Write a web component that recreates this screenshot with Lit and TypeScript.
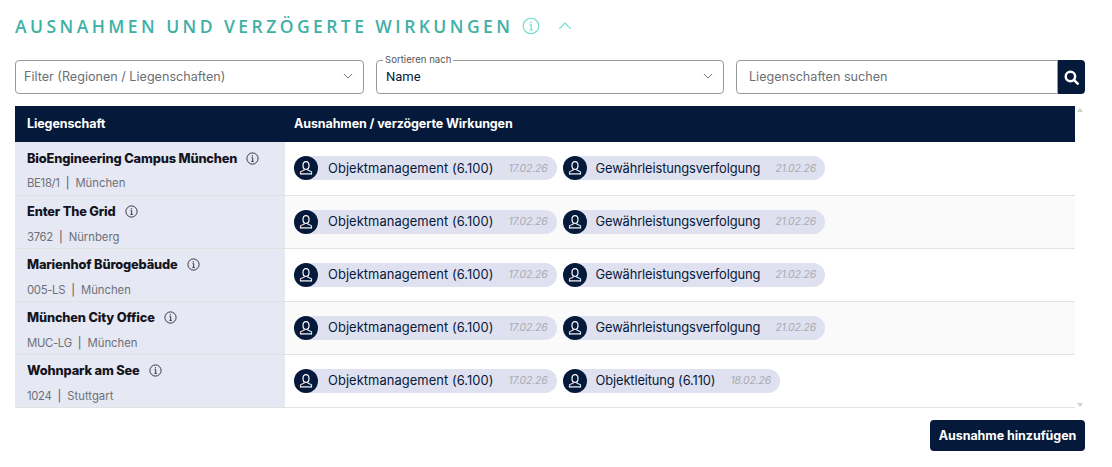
import { LitElement, html, css, svg } from "lit";
import { customElement } from "lit/decorators.js";

const rows = [
  { n: "BioEngineering Campus München", s: "BE18/1", c: "München", b: "Gewährleistungsverfolgung", d: "21.02.26" },
  { n: "Enter The Grid", s: "3762", c: "Nürnberg", b: "Gewährleistungsverfolgung", d: "21.02.26" },
  { n: "Marienhof Bürogebäude", s: "005-LS", c: "München", b: "Gewährleistungsverfolgung", d: "21.02.26" },
  { n: "München City Office", s: "MUC-LG", c: "München", b: "Gewährleistungsverfolgung", d: "21.02.26" },
  { n: "Wohnpark am See", s: "1024", c: "Stuttgart", b: "Objektleitung (6.110)", d: "18.02.26" },
];

const info = (cls: string) => html`<svg class=${cls} viewBox="0 0 16 16" fill="none" stroke="currentColor" stroke-width="1">
  <circle cx="8" cy="8" r="6.9"></circle>
  <path d="M6.7 7h1.5v4.4M6.5 11.5h3.2"></path>
  <circle cx="7.9" cy="4.7" r=".8" fill="currentColor" stroke="none"></circle>
</svg>`;
const chev = (cls: string) => html`<svg class=${cls} viewBox="0 0 12 7" fill="none" stroke="currentColor" stroke-width="1"><path d="M1 1l5 5 5-5"></path></svg>`;
const person = svg`<g fill="none" stroke-width="1.2">
  <ellipse cx="12" cy="9.6" rx="3" ry="3.9" stroke="#fff"></ellipse>
  <path stroke="#f4c6cc" d="M10.2 13.2v.9l-3.7 1.7v2.4"></path>
  <path stroke="#c4e6f6" d="M13.8 13.2v.9l3.7 1.7v2.4"></path>
  <path stroke="#fff" d="M6 17.9h12"></path>
</g>`;

@customElement("app-root")
export class AppRoot extends LitElement {
  static styles = css`
    :host { display: block; width: 1112px; height: 467px; background: #fff; font-family: "Inter", "Noto Sans", sans-serif; color: #051a3a; overflow: hidden; }
    .page { padding: 15px 27px 0 15px; display: flex; flex-direction: column; }
    .title { display: flex; align-items: center; height: 22px; color: #3fb0a6; font-family: "Open Sans", sans-serif; font-size: 17.5px; font-weight: 600; letter-spacing: 3.44px; }
    .title .i { width: 18px; height: 18px; margin-left: 9px; color: #6fdccf; }
    .title .c { width: 14px; height: 8px; margin-left: 18px; color: #6fdccf; transform: rotate(180deg); }
    .filters { display: grid; grid-template-columns: 349px 348px 349px; gap: 12px; margin-top: 23px; margin-bottom: 12px; }
    .field { position: relative; height: 34px; border: 1px solid #9a9a9a; border-radius: 4px; box-sizing: border-box; display: flex; align-items: center; justify-content: space-between; padding: 0 9px 2px 8px; font-size: 12.6px; color: #6b6f76; }
    .field.sort { color: #051a3a; padding-left: 9px; font-family: "Roboto", sans-serif; font-size: 13px; }
    .field svg { width: 10px; height: 6px; color: #555; margin-right: 1px; }
    .legend { position: absolute; left: 6px; top: -6px; background: #fff; padding: 0 2px; font-family: "Inter", sans-serif; font-size: 9.6px; line-height: 10px; color: #555; }
    .search { display: flex; height: 34px; }
    .search .field { flex: 1; border-radius: 4px 0 0 4px; padding-left: 12px; }
    .search button { width: 27px; border: 0; padding: 0; background: #051a3a; border-radius: 0 4px 4px 0; display: flex; align-items: center; justify-content: center; }
    .search button svg { width: 15px; height: 15px; }
    .wrap { display: flex; }
    table { width: 1060px; border-collapse: collapse; table-layout: fixed; }
    th { height: 36px; padding: 0 0 2px 9px; background: #051a3a; color: #fff; font-size: 12.5px; font-weight: 700; text-align: left; letter-spacing: -0.1px; box-sizing: border-box; }
    th:first-child { width: 270px; padding-left: 12px; }
    td { height: 53px; padding: 0; box-sizing: border-box; border-bottom: 1px solid #e2e2e2; }
    tr:nth-child(even) td.r { background: #fafafa; }
    td.l { background: #e6e8f3; padding-left: 12px; vertical-align: top; }
    .n { display: flex; align-items: center; margin-top: 8px; height: 16px; font-size: 12.8px; font-weight: 800; color: #14141e; letter-spacing: -0.15px; }
    .n svg { width: 13px; height: 13px; margin-left: 9px; color: #14141e; }
    .s { display: flex; margin-top: 10px; font-size: 11.3px; line-height: 14px; color: #6f7077; }
    .code { letter-spacing: -0.3px; }
    .sep { margin: 0 6px; color: #55565e; }
    .pills { display: flex; gap: 6px; padding-left: 9px; }
    .pill { display: flex; align-items: center; height: 24px; background: #e0e1f0; border-radius: 12px; color: #051a3a; font-size: 12.9px; padding-right: 9px; }
    .pill .first { letter-spacing: 0.07px; }
    .pill .second { letter-spacing: -0.13px; margin-left: -1px; }
    .av { width: 24px; height: 24px; border-radius: 50%; background: #051a3a; margin-right: 10px; flex: none; }
    .av svg { width: 24px; height: 24px; display: block; }
    .date { margin-left: 15px; font-size: 10.5px; font-style: italic; color: #a9aab2; letter-spacing: -0.2px; }
    .bar { width: 10px; position: relative; }
    .up, .dn { position: absolute; left: 2px; width: 0; height: 0; border-left: 3px solid transparent; border-right: 3px solid transparent; }
    .up { top: 2px; border-bottom: 4px solid #d0d0d0; }
    .dn { bottom: 1px; border-top: 4px solid #d0d0d0; }
    .foot { display: flex; justify-content: flex-end; margin-top: 12px; }
    .add { height: 31px; width: 155px; padding: 0; border: 0; border-radius: 4px; background: #051a3a; color: #fff; font: 700 12.5px "Inter", sans-serif; letter-spacing: -0.05px; }
  `;

  render() {
    return html`<div class="page">
      <div class="title"><span>AUSNAHMEN UND VERZÖGERTE WIRKUNGEN</span>${info("i")}${chev("c")}</div>
      <div class="filters">
        <div class="field"><span>Filter (Regionen / Liegenschaften)</span>${chev("")}</div>
        <div class="field sort"><span class="legend">Sortieren nach</span><span>Name</span>${chev("")}</div>
        <div class="search"><div class="field"><span>Liegenschaften suchen</span></div>
          <button aria-label="Suchen"><svg viewBox="0 0 14 14" fill="none" stroke="#fff" stroke-width="2.3"><circle cx="6" cy="6" r="4.4"></circle><path d="M9.4 9.4L12.8 12.8" stroke-linecap="round"></path></svg></button></div>
      </div>
      <div class="wrap">
        <table>
          <thead><tr><th>Liegenschaft</th><th>Ausnahmen / verzögerte Wirkungen</th></tr></thead>
          <tbody>${rows.map((r) => html`<tr>
            <td class="l"><div class="n"><span>${r.n}</span>${info("")}</div><div class="s"><span class="code">${r.s}</span><span class="sep">|</span><span>${r.c}</span></div></td>
            <td class="r"><div class="pills">
              ${this.pill("Objektmanagement (6.100)", "17.02.26", "first")}
              ${this.pill(r.b, r.d, "second")}
            </div></td></tr>`)}</tbody>
        </table>
        <div class="bar"><span class="up"></span><span class="dn"></span></div>
      </div>
      <div class="foot"><button class="add">Ausnahme hinzufügen</button></div>
    </div>`;
  }

  pill(t: string, d: string, cls: string) {
    return html`<div class="pill"><span class="av"><svg viewBox="0 0 24 24">${person}</svg></span><span class=${cls}>${t}</span><span class="date">${d}</span></div>`;
  }
}
